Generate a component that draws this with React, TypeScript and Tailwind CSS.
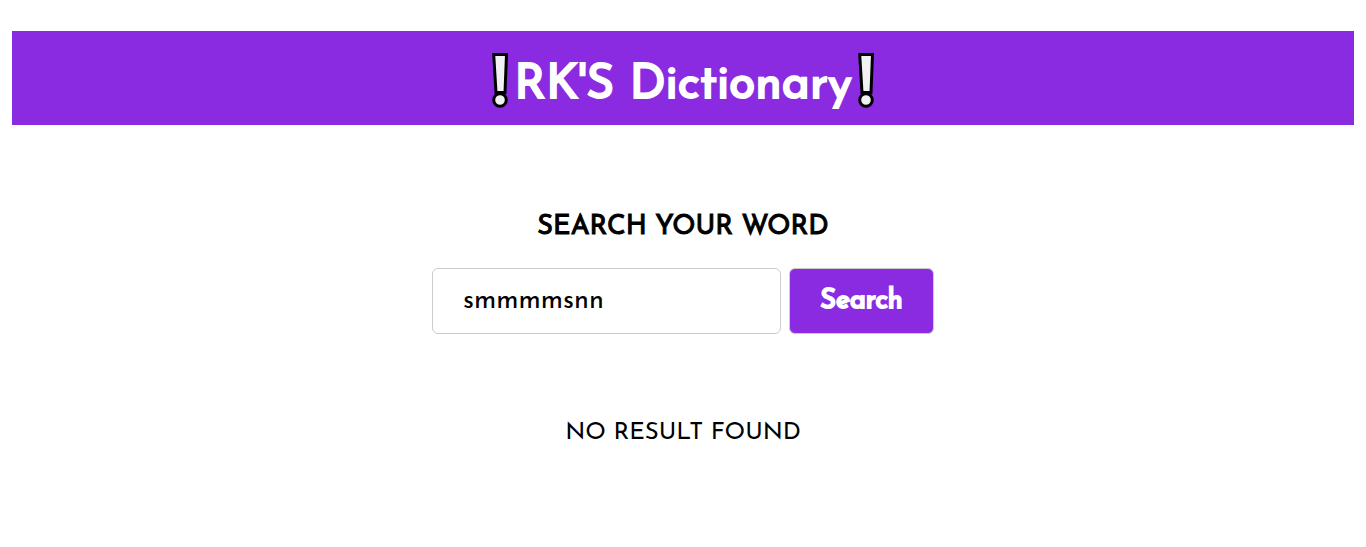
import { useState } from "react";

function ExclamationMark() {
  return (
    <svg
      aria-hidden="true"
      viewBox="0 0 16 56"
      className="h-14 w-4 shrink-0"
      fill="#f2f2f2"
      stroke="#000"
      strokeWidth="3"
    >
      <path d="M1.7 2.5H14.5L13 40.5H4Z" />
      <circle cx="8" cy="48" r="6.3" />
    </svg>
  );
}

export default function App() {
  const [word, setWord] = useState("smmmmsnn");

  return (
    <main className="flex flex-col items-center px-3 pt-[31px] pb-24 font-['Josefin_Sans',Lato,sans-serif] text-black">
      <h1 className="flex w-full items-start justify-center gap-1.5 bg-[#8a2be2] pt-[21px] pb-[11px] text-5xl leading-[56px] font-normal text-white [-webkit-text-stroke:2px_white]">
        <ExclamationMark />
        <span className="pt-1.5">RK'S Dictionary</span>
        <ExclamationMark />
      </h1>
      <form
        className="mt-20 flex flex-col items-center"
        onSubmit={(event) => event.preventDefault()}
      >
        <label
          htmlFor="word"
          className="pt-[3px] text-[27px] leading-10 font-normal [-webkit-text-stroke:1px_black]"
        >
          SEARCH YOUR WORD
        </label>
        <div className="mt-5 flex gap-2">
          <input
            id="word"
            type="text"
            value={word}
            onChange={(event) => setWord(event.target.value)}
            className="h-[66px] w-[349px] rounded-md border border-[#ccc] px-[30px] text-[27px] outline-none"
          />
          <button
            type="submit"
            className="h-[66px] w-[145px] rounded-md border border-[#ccc] bg-[#8a2be2] pt-0.5 text-[27px] font-normal text-white [-webkit-text-stroke:2px_white]"
          >
            Search
          </button>
        </div>
      </form>
      <p className="mt-[81px] text-2xl leading-9">NO RESULT FOUND</p>
    </main>
  );
}
